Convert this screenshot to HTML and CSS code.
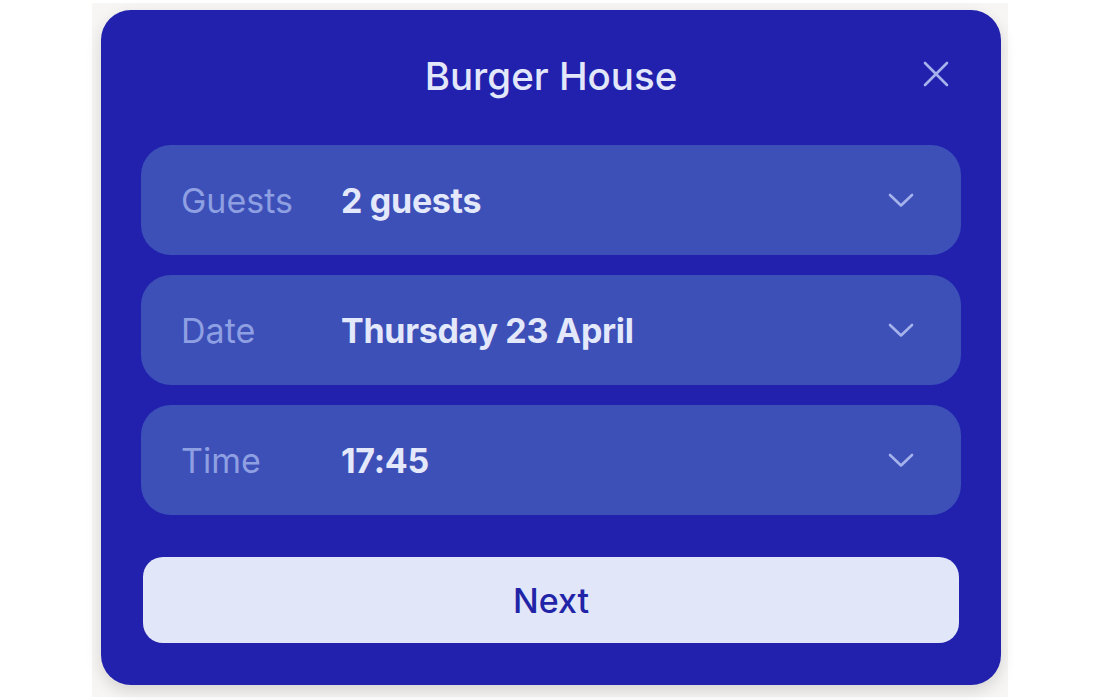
FILE: index.html
```html
<!DOCTYPE html>
<html lang="en">
<head>
<meta charset="utf-8">
<title>Burger House</title>
<link rel="stylesheet" href="styles.css">
</head>
<body>
<div class="stage">
  <div class="card">
    <header class="header">
      <h1 class="title">Burger House</h1>
      <button class="close" aria-label="Close">
        <svg width="26" height="26" viewBox="0 0 26 26"><path d="M2 2 L24 24 M24 2 L2 24" stroke="currentColor" stroke-width="2.6" stroke-linecap="round" fill="none"/></svg>
      </button>
    </header>
    <div class="fields">
      <div class="field">
        <span class="label">Guests</span>
        <span class="value">2 guests</span>
        <svg class="chev" width="26" height="15" viewBox="0 0 26 15"><path d="M2 2 L13 12.5 L24 2" stroke="currentColor" stroke-width="2.6" stroke-linecap="round" stroke-linejoin="round" fill="none"/></svg>
      </div>
      <div class="field">
        <span class="label">Date</span>
        <span class="value">Thursday 23 April</span>
        <svg class="chev" width="26" height="15" viewBox="0 0 26 15"><path d="M2 2 L13 12.5 L24 2" stroke="currentColor" stroke-width="2.6" stroke-linecap="round" stroke-linejoin="round" fill="none"/></svg>
      </div>
      <div class="field">
        <span class="label">Time</span>
        <span class="value">17:45</span>
        <svg class="chev" width="26" height="15" viewBox="0 0 26 15"><path d="M2 2 L13 12.5 L24 2" stroke="currentColor" stroke-width="2.6" stroke-linecap="round" stroke-linejoin="round" fill="none"/></svg>
      </div>
    </div>
    <button class="next">Next</button>
  </div>
</div>
</body>
</html>
```

FILE: styles.css
```css
* { box-sizing: border-box; }
html, body { margin: 0; padding: 0; background: #ffffff; }
body {
  font-family: Inter, "Noto Sans", sans-serif;
  width: 1100px;
  height: 700px;
  overflow: hidden;
}
.stage {
  margin: 3px 0 0 92px;
  width: 916px;
  height: 694px;
  background: #f7f6f4;
  padding: 7px 0 0 9px;
}
.card {
  width: 900px;
  height: 675px;
  background: #2121ad;
  border-radius: 30px;
  box-shadow: 0 6px 16px rgba(0, 0, 0, 0.14);
  padding: 0 40px 42px;
  display: flex;
  flex-direction: column;
}
.header {
  position: relative;
  height: 132px;
  margin-bottom: 3px;
  display: flex;
  align-items: center;
  justify-content: center;
}
.title {
  margin: 0;
  font-size: 38.5px;
  font-weight: 500;
  color: #e2e7fa;
  letter-spacing: 0;
}
.close {
  position: absolute;
  right: 12px;
  top: 51px;
  width: 26px;
  height: 26px;
  padding: 0;
  border: 0;
  background: none;
  color: #a5b2ec;
  display: flex;
}
.fields {
  display: flex;
  flex-direction: column;
  gap: 20px;
}
.field {
  height: 110px;
  background: #3d50b8;
  border-radius: 30px;
  display: flex;
  align-items: center;
  padding: 0 47px 0 40px;
}
.label {
  width: 160px;
  font-size: 34px;
  font-weight: 400;
  color: #8e9fe2;
}
.value {
  flex: 1;
  font-size: 34px;
  font-weight: 700;
  letter-spacing: -0.3px;
  color: #e4e8fb;
}
.chev { color: #a5b2ec; }
.next {
  margin: 42px 2px 0;
  height: 86px;
  border: 0;
  border-radius: 20px;
  background: #e1e6f8;
  color: #2224a8;
  font-family: inherit;
  font-size: 34px;
  font-weight: 500;
}
```
